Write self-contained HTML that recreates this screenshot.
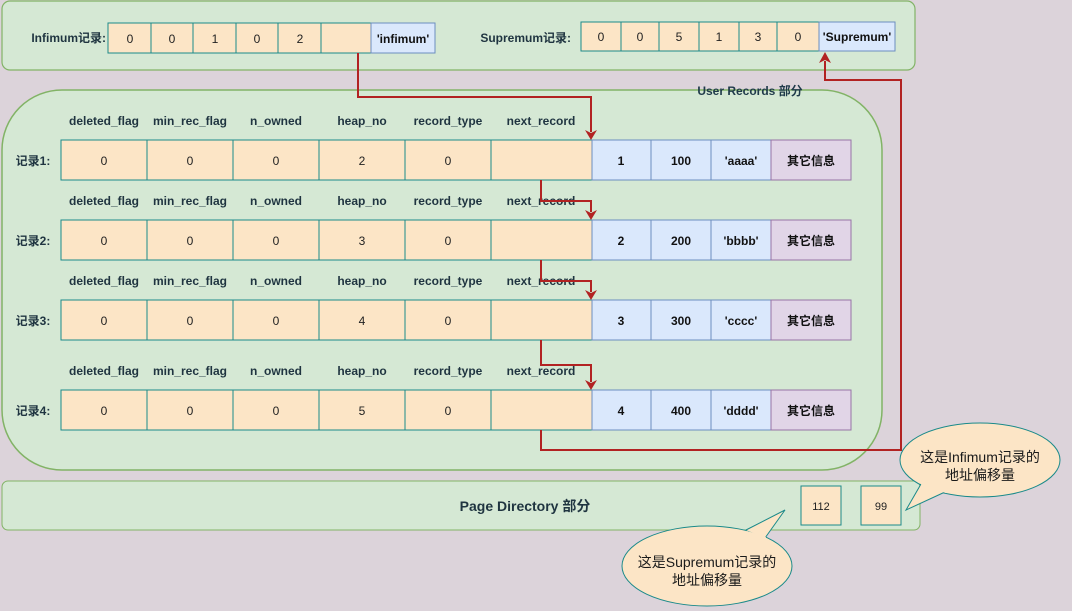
<!DOCTYPE html>
<html><head><meta charset="utf-8"><style>
html,body{margin:0;padding:0;background:#dcd3da;}
svg{display:block;}
text{font-family:"Liberation Sans","Noto Sans CJK SC",sans-serif;}
</style></head><body>
<svg width="1072" height="611" xmlns="http://www.w3.org/2000/svg">
<rect x="0" y="0" width="1072" height="611" fill="#dcd3da"/>
<rect x="2" y="1" width="913" height="69" rx="8" fill="#d5e8d4" stroke="#82b366" stroke-width="1.2"/>
<g font-size="12" font-weight="bold" fill="#1f3440">
<text x="106" y="42" text-anchor="end">Infimum记录:</text>
<text x="571" y="42" text-anchor="end">Supremum记录:</text>
</g>
<g stroke="#1a8a8a" fill="#fce5c6" stroke-width="1">
<rect x="108" y="23" width="43" height="30"/><rect x="151" y="23" width="42" height="30"/><rect x="193" y="23" width="43" height="30"/><rect x="236" y="23" width="42" height="30"/><rect x="278" y="23" width="43" height="30"/><rect x="321" y="23" width="50" height="30"/>
<rect x="581" y="22" width="40" height="29"/><rect x="621" y="22" width="38" height="29"/><rect x="659" y="22" width="40" height="29"/><rect x="699" y="22" width="40" height="29"/><rect x="739" y="22" width="38" height="29"/><rect x="777" y="22" width="42" height="29"/>
</g>
<rect x="371" y="23" width="64" height="30" fill="#dae8fc" stroke="#6c8ebf"/>
<rect x="819" y="22" width="76" height="29" fill="#dae8fc" stroke="#6c8ebf"/>
<g font-size="12" fill="#222" text-anchor="middle">
<text x="130" y="43">0</text><text x="172" y="43">0</text><text x="215" y="43">1</text><text x="257" y="43">0</text><text x="300" y="43">2</text>
<text x="601" y="41">0</text><text x="640" y="41">0</text><text x="679" y="41">5</text><text x="719" y="41">1</text><text x="758" y="41">3</text><text x="798" y="41">0</text>
</g>
<g font-size="12" font-weight="bold" fill="#111" text-anchor="middle">
<text x="403" y="43">'infimum'</text><text x="857" y="41">'Supremum'</text>
</g>
<rect x="2" y="90" width="880" height="380" rx="60" fill="#d5e8d4" stroke="#82b366" stroke-width="1.5"/>
<text x="750" y="95" font-size="12" font-weight="bold" fill="#1f3a4a" text-anchor="middle">User Records 部分</text>
<g font-size="12" font-weight="bold" fill="#1f3440" text-anchor="middle">
<text x="104" y="125">deleted_flag</text><text x="190" y="125">min_rec_flag</text><text x="276" y="125">n_owned</text><text x="362" y="125">heap_no</text><text x="448" y="125">record_type</text><text x="541" y="125">next_record</text>
<text x="104" y="205">deleted_flag</text><text x="190" y="205">min_rec_flag</text><text x="276" y="205">n_owned</text><text x="362" y="205">heap_no</text><text x="448" y="205">record_type</text><text x="541" y="205">next_record</text>
<text x="104" y="285">deleted_flag</text><text x="190" y="285">min_rec_flag</text><text x="276" y="285">n_owned</text><text x="362" y="285">heap_no</text><text x="448" y="285">record_type</text><text x="541" y="285">next_record</text>
<text x="104" y="375">deleted_flag</text><text x="190" y="375">min_rec_flag</text><text x="276" y="375">n_owned</text><text x="362" y="375">heap_no</text><text x="448" y="375">record_type</text><text x="541" y="375">next_record</text>
<text x="33" y="165">记录1:</text><text x="33" y="245">记录2:</text><text x="33" y="325">记录3:</text><text x="33" y="415">记录4:</text>
</g>
<g stroke="#1a8a8a" fill="#fce5c6">
<rect x="61" y="140" width="86" height="40"/><rect x="147" y="140" width="86" height="40"/><rect x="233" y="140" width="86" height="40"/><rect x="319" y="140" width="86" height="40"/><rect x="405" y="140" width="86" height="40"/><rect x="491" y="140" width="101" height="40"/>
<rect x="61" y="220" width="86" height="40"/><rect x="147" y="220" width="86" height="40"/><rect x="233" y="220" width="86" height="40"/><rect x="319" y="220" width="86" height="40"/><rect x="405" y="220" width="86" height="40"/><rect x="491" y="220" width="101" height="40"/>
<rect x="61" y="300" width="86" height="40"/><rect x="147" y="300" width="86" height="40"/><rect x="233" y="300" width="86" height="40"/><rect x="319" y="300" width="86" height="40"/><rect x="405" y="300" width="86" height="40"/><rect x="491" y="300" width="101" height="40"/>
<rect x="61" y="390" width="86" height="40"/><rect x="147" y="390" width="86" height="40"/><rect x="233" y="390" width="86" height="40"/><rect x="319" y="390" width="86" height="40"/><rect x="405" y="390" width="86" height="40"/><rect x="491" y="390" width="101" height="40"/>
</g>
<g stroke="#6c8ebf" fill="#dae8fc">
<rect x="592" y="140" width="59" height="40"/><rect x="651" y="140" width="60" height="40"/><rect x="711" y="140" width="60" height="40"/>
<rect x="592" y="220" width="59" height="40"/><rect x="651" y="220" width="60" height="40"/><rect x="711" y="220" width="60" height="40"/>
<rect x="592" y="300" width="59" height="40"/><rect x="651" y="300" width="60" height="40"/><rect x="711" y="300" width="60" height="40"/>
<rect x="592" y="390" width="59" height="40"/><rect x="651" y="390" width="60" height="40"/><rect x="711" y="390" width="60" height="40"/>
</g>
<g stroke="#9673a6" fill="#e1d5e7">
<rect x="771" y="140" width="80" height="40"/><rect x="771" y="220" width="80" height="40"/><rect x="771" y="300" width="80" height="40"/><rect x="771" y="390" width="80" height="40"/>
</g>
<g font-size="12" fill="#222" text-anchor="middle">
<text x="104" y="165">0</text><text x="190" y="165">0</text><text x="276" y="165">0</text><text x="362" y="165">2</text><text x="448" y="165">0</text>
<text x="104" y="245">0</text><text x="190" y="245">0</text><text x="276" y="245">0</text><text x="362" y="245">3</text><text x="448" y="245">0</text>
<text x="104" y="325">0</text><text x="190" y="325">0</text><text x="276" y="325">0</text><text x="362" y="325">4</text><text x="448" y="325">0</text>
<text x="104" y="415">0</text><text x="190" y="415">0</text><text x="276" y="415">0</text><text x="362" y="415">5</text><text x="448" y="415">0</text>
</g>
<g font-size="12" font-weight="bold" fill="#111" text-anchor="middle">
<text x="621" y="165">1</text><text x="681" y="165">100</text><text x="741" y="165">'aaaa'</text><text x="811" y="165">其它信息</text>
<text x="621" y="245">2</text><text x="681" y="245">200</text><text x="741" y="245">'bbbb'</text><text x="811" y="245">其它信息</text>
<text x="621" y="325">3</text><text x="681" y="325">300</text><text x="741" y="325">'cccc'</text><text x="811" y="325">其它信息</text>
<text x="621" y="415">4</text><text x="681" y="415">400</text><text x="741" y="415">'dddd'</text><text x="811" y="415">其它信息</text>
</g>
<rect x="2" y="481" width="918" height="49" rx="6" fill="#d5e8d4" stroke="#82b366"/>
<text x="525" y="511" font-size="14" font-weight="bold" fill="#1f3440" text-anchor="middle">Page Directory 部分</text>
<rect x="801" y="486" width="40" height="39" fill="#fce5c6" stroke="#1a8a8a"/>
<rect x="861" y="486" width="40" height="39" fill="#fce5c6" stroke="#1a8a8a"/>
<text x="821" y="510" font-size="11" fill="#222" text-anchor="middle">112</text>
<text x="881" y="510" font-size="11" fill="#222" text-anchor="middle">99</text>
<g stroke="#b22222" stroke-width="2" fill="none">
<path d="M358 53 V97 H591 V132"/>
<path d="M541 180 V201 H591 V212"/>
<path d="M541 260 V281 H591 V292"/>
<path d="M541 340 V365 H591 V382"/>
<path d="M541 430 V450 H901 V80 H825 V61"/>
</g>
<g fill="#b22222">
<path d="M585 130 L591 140 L597 130 L591 133Z"/>
<path d="M585 210 L591 220 L597 210 L591 213Z"/>
<path d="M585 290 L591 300 L597 290 L591 293Z"/>
<path d="M585 380 L591 390 L597 380 L591 383Z"/>
<path d="M819 63 L825 52 L831 63 L825 60Z"/>
</g>
<!-- callout 1 -->
<ellipse cx="980" cy="460" rx="80" ry="37" fill="#fce5c6" stroke="#1a8a8a"/>
<path d="M921 484 L906 510 L945 492" fill="#fce5c6" stroke="#1a8a8a"/>
<path d="M919 480 L922 486 L946 493 L948 488Z" fill="#fce5c6"/>
<!-- callout 2 -->
<ellipse cx="707" cy="566" rx="85" ry="40" fill="#fce5c6" stroke="#1a8a8a"/>
<path d="M746 530 L785 510 L765 538" fill="#fce5c6" stroke="#1a8a8a"/>
<path d="M744 533 L747 531 L766 537 L765 542Z" fill="#fce5c6"/>
<g font-size="14" fill="#1a1a1a" text-anchor="middle">
<text x="980" y="462">这是Infimum记录的</text><text x="980" y="480">地址偏移量</text>
<text x="707" y="567">这是Supremum记录的</text><text x="707" y="585">地址偏移量</text>
</g>
</svg>
</body></html>
